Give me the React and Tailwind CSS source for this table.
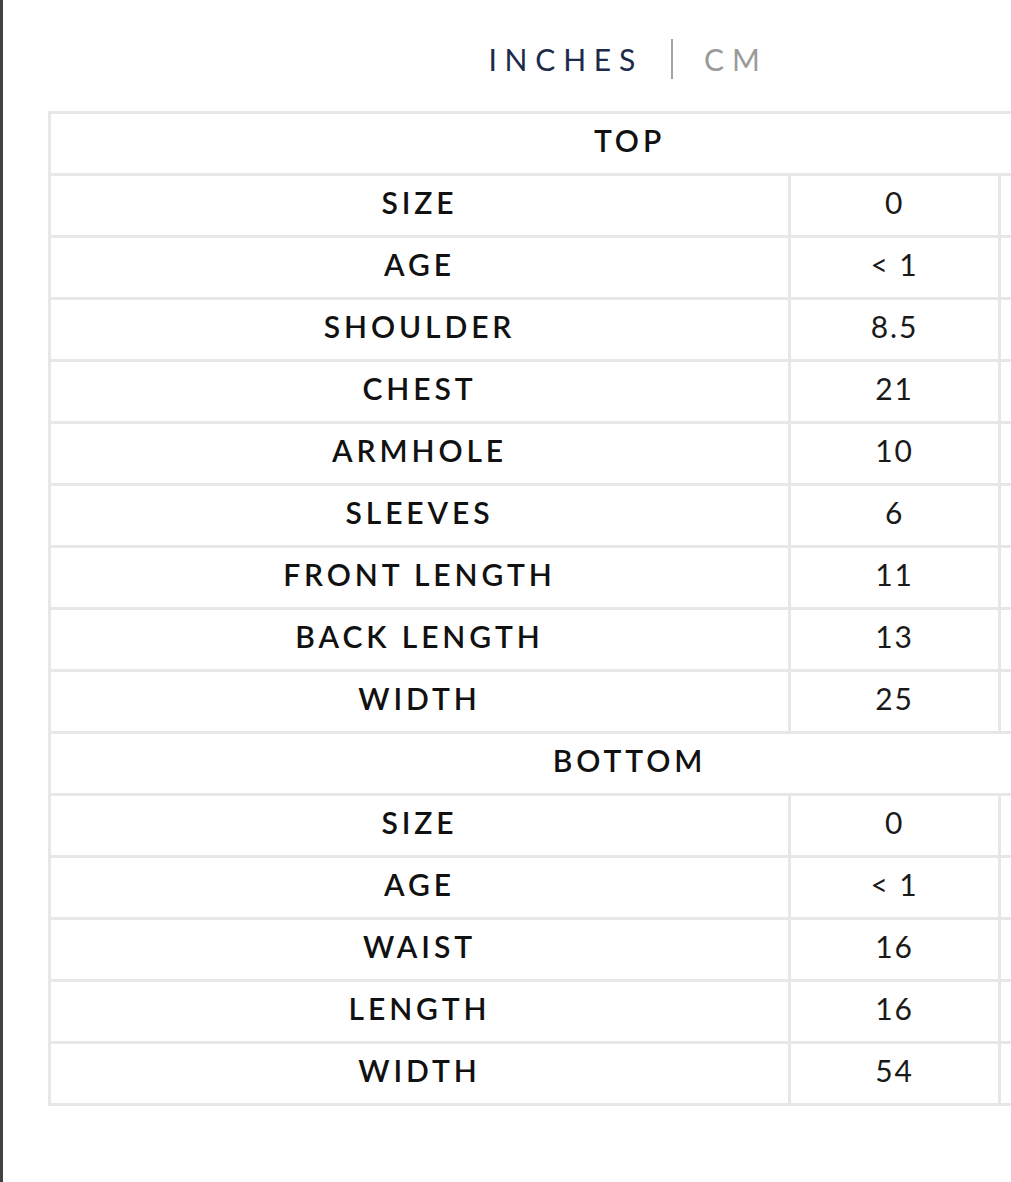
import React from "react";

const top = [
  ["SIZE", "0"],
  ["AGE", "< 1"],
  ["SHOULDER", "8.5"],
  ["CHEST", "21"],
  ["ARMHOLE", "10"],
  ["SLEEVES", "6"],
  ["FRONT LENGTH", "11"],
  ["BACK LENGTH", "13"],
  ["WIDTH", "25"],
];

const bottom = [
  ["SIZE", "0"],
  ["AGE", "< 1"],
  ["WAIST", "16"],
  ["LENGTH", "16"],
  ["WIDTH", "54"],
];

const cell = "border-[3px] border-[#e7e7e9] h-[62px] p-0 pb-[7px] text-center align-middle";
const label = "font-semibold tracking-[0.13em] text-[#111]";

const Section = ({ title, rows }) => (
  <>
    <tr>
      <td colSpan={3} className={`${cell} ${label}`}>
        {title}
      </td>
    </tr>
    {rows.map(([name, a], i) => (
      <tr key={title + i}>
        <td className={`${cell} ${label}`}>{name}</td>
        <td className={`${cell} tracking-[0.06em] text-[#1a1a1a]`}>{a}</td>
        <td className={cell}></td>
      </tr>
    ))}
  </>
);

export default function App() {
  return (
    <div
      className="w-[1011px] h-[1182px] overflow-hidden bg-white flex"
      style={{ fontFamily: "Lato, 'Open Sans', sans-serif" }}
    >
      <div className="w-[3px] shrink-0 bg-[#414141]" />
      <div className="pl-[45px] shrink-0">
        {/* unit switch */}
        <div className="w-[1160px] flex justify-center items-center pt-[39px] pb-[32px] text-[30px] leading-[36px]">
          <span className="text-[#1c2b4a] tracking-[0.26em]">INCHES</span>
          <span className="ml-[28px] mr-[31px] w-[2px] h-[40px] bg-[#a3a3a3]" />
          <span className="text-[#9a9a9a] tracking-[0.26em]">CM</span>
        </div>

        {/* size chart */}
        <table className="w-[1160px] border-collapse table-fixed text-[30px]">
          <colgroup>
            <col className="w-[740px]" />
            <col className="w-[210px]" />
            <col className="w-[210px]" />
          </colgroup>
          <tbody>
            <Section title="TOP" rows={top} />
            <Section title="BOTTOM" rows={bottom} />
          </tbody>
        </table>
      </div>
    </div>
  );
}
